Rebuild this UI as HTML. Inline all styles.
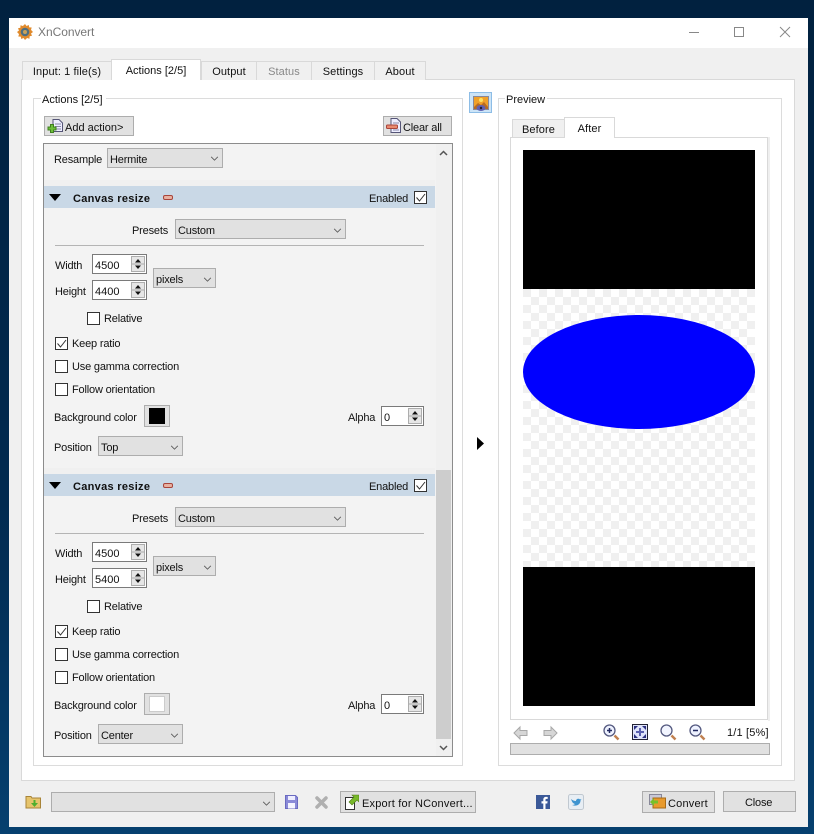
<!DOCTYPE html>
<html><head><meta charset="utf-8"><style>
html,body{margin:0;padding:0;width:814px;height:834px;overflow:hidden}
body{position:relative;background:linear-gradient(180deg,#01213f 0,#012a50 60%,#06406f 100%);font:11px "Liberation Sans",sans-serif;color:#111}
div,svg,span{position:absolute;box-sizing:border-box}
.t{white-space:nowrap;line-height:14px;height:14px;letter-spacing:-.18px;margin-top:1px}
.n{letter-spacing:0}
.b{background:#e1e1e1;border:1px solid #adadad}
.tab{background:#f0f0f0;border:1px solid #d9d9d9;border-bottom:0;text-align:center;line-height:21px;letter-spacing:.1px}
.cb{width:13px;height:13px;border:1px solid #333;background:#fff;margin-top:1px}
.sp{background:#fff;border:1px solid #7a7a7a}
.ub{background:#e6e6e6;border:1px solid #adadad;width:14px;height:16px}
</style></head><body>
<svg style="left:0;top:0" width="0" height="0"><defs>
<symbol id="chev" viewBox="0 0 10 6"><path d="M1 1l4 4 4-4" fill="none" stroke="#555"/></symbol>
<symbol id="spin" viewBox="0 0 12 16"><path d="M6 3l3 3.500H3z M6 13l3-3.500H3z" fill="#111"/><path d="M0 8h12" stroke="#aaa"/></symbol>
<symbol id="check" viewBox="0 0 13 13"><path d="M2.500 6.500l3 3.500 5.500-7" fill="none" stroke="#333"/></symbol>
<symbol id="minus" viewBox="0 0 10 5"><rect x=".5" y=".5" width="9" height="4" rx="1.500" fill="#e8b0a0" stroke="#a8443a"/></symbol>
</defs></svg>

<!-- window -->
<div style="left:9px;top:18px;width:799px;height:809px;background:#f0f0f0"></div>
<div style="left:9px;top:18px;width:799px;height:30px;background:#fff"></div>
<svg style="left:17px;top:24px" width="16" height="16" viewBox="0 0 16 16"><path d="M8 0l1.500 2 2.300-1 .4 2.400 2.500.1-.7 2.400L16 8l-2 1.500 1 2.300-2.400.4-.1 2.500-2.400-.7L8 16l-1.500-2-2.300 1-.4-2.400-2.500-.1.7-2.400L0 8l2-1.500-1-2.300 2.400-.4.1-2.500 2.400.7z" fill="#e08a2c"/><circle cx="8" cy="8" r="4.300" fill="#4f6f80"/><circle cx="8" cy="8" r="2" fill="#c9a25a"/></svg>
<div class="t" style="left:38px;top:24px;font-size:12px;color:#777;letter-spacing:-.05px">XnConvert</div>
<svg style="left:680px;top:19px" width="125" height="26" viewBox="0 0 125 26"><path d="M9 13.500h10" stroke="#888"/><rect x="54.500" y="8.500" width="9" height="9" fill="none" stroke="#888"/><path d="M100 8l10 10M110 8l-10 10" stroke="#888"/></svg>

<!-- tabs -->
<div style="left:21px;top:79px;width:774px;height:702px;background:#fff;border:1px solid #d9d9d9"></div>
<div class="tab" style="left:22px;top:61px;width:90px;height:19px">Input: 1 file(s)</div>
<div class="tab" style="left:201px;top:61px;width:56px;height:19px">Output</div>
<div class="tab" style="left:256px;top:61px;width:56px;height:19px;color:#888">Status</div>
<div class="tab" style="left:311px;top:61px;width:64px;height:19px">Settings</div>
<div class="tab" style="left:374px;top:61px;width:52px;height:19px">About</div>
<div class="tab" style="left:111px;top:59px;width:90px;height:21px;background:#fff;line-height:23px;letter-spacing:0">Actions [2/5]</div>

<!-- actions group -->
<div style="left:33px;top:98px;width:430px;height:668px;border:1px solid #dcdcdc"></div>
<div class="t" style="left:41px;top:92px;background:#fff;padding:0 1px 0 1px;width:65px;letter-spacing:0">Actions [2/5]</div>
<div class="b" style="left:44px;top:116px;width:90px;height:20px"></div>
<svg style="left:47px;top:119px" width="17" height="16" viewBox="0 0 17 16"><path d="M6 .5h6l3.500 3.500v8.500H6z" fill="#eef" stroke="#557"/><path d="M8 5h6M8 7.500h6M8 10h6" stroke="#88a"/><path d="M3.500 5.500h3v2.500h2.500v3H6.500v2.500h-3V11H1V8h2.500z" fill="#6cbf3a" stroke="#3f7f1e"/></svg>
<div class="t" style="left:65px;top:120px;letter-spacing:0">Add action&gt;</div>
<div class="b" style="left:383px;top:116px;width:69px;height:20px"></div>
<svg style="left:386px;top:118px" width="16" height="16" viewBox="0 0 16 16"><path d="M5 .5h6l3.500 3.500v10.500H5z" fill="#eef" stroke="#557"/><path d="M7 5h6M7 12h6" stroke="#88a"/><rect x=".5" y="7" width="11" height="3.500" rx="1" fill="#e98a70" stroke="#a8443a"/></svg>
<div class="t" style="left:403px;top:120px">Clear all</div>

<!-- scroll area -->
<div style="left:43px;top:143px;width:410px;height:614px;background:#f3f3f3;border:1px solid #8c8c8c"></div>
<div style="left:436px;top:144px;width:16px;height:612px;background:#f0f0f0"></div>
<div style="left:436px;top:470px;width:15px;height:269px;background:#cdcdcd"></div>
<svg style="left:439px;top:150px" width="9" height="6" viewBox="0 0 9 6"><path d="M1 5l3.500-3.500L8 5" fill="none" stroke="#555" stroke-width="1.500"/></svg>
<svg style="left:439px;top:745px" width="9" height="6" viewBox="0 0 9 6"><path d="M1 1l3.500 3.500L8 1" fill="none" stroke="#555" stroke-width="1.500"/></svg>
<div class="t" style="left:54px;top:152px">Resample</div>
<div class="b" style="left:107px;top:148px;width:116px;height:20px"></div>
<div class="t" style="left:110px;top:152px">Hermite</div>
<svg style="left:210px;top:156px" width="9" height="5"><use href="#chev"/></svg>

<!-- section 1 -->
<div style="left:44px;top:180px;width:391px;height:6px;background:#f0f0f0"></div>
<div style="left:44px;top:186px;width:391px;height:22px;background:#c9d8e6"></div>
<svg style="left:49px;top:194px" width="12" height="7"><path d="M0 0h12L6 7z" fill="#000"/></svg>
<div class="t" style="left:73px;top:191px;font-weight:bold;letter-spacing:.3px">Canvas resize</div>
<svg style="left:163px;top:195px" width="10" height="5"><use href="#minus"/></svg>
<div class="t" style="left:369px;top:191px">Enabled</div>
<div class="cb" style="left:414px;top:190px"></div><svg style="left:414px;top:191px" width="13" height="13"><use href="#check"/></svg>
<div class="t" style="left:132px;top:223px">Presets</div>
<div class="b" style="left:175px;top:219px;width:171px;height:20px"></div>
<div class="t" style="left:178px;top:223px">Custom</div>
<svg style="left:333px;top:228px" width="9" height="5"><use href="#chev"/></svg>
<div style="left:55px;top:245px;width:369px;height:1px;background:#b4b4b4"></div>
<div class="t" style="left:55px;top:258px">Width</div>
<div class="sp" style="left:92px;top:254px;width:55px;height:20px"></div>
<div class="t n" style="left:95px;top:258px">4500</div>
<div class="ub" style="left:131px;top:256px"></div><svg style="left:132px;top:256px" width="12" height="16"><use href="#spin"/></svg>
<div class="t" style="left:55px;top:284px">Height</div>
<div class="sp" style="left:92px;top:280px;width:55px;height:20px"></div>
<div class="t n" style="left:95px;top:284px">4400</div>
<div class="ub" style="left:131px;top:282px"></div><svg style="left:132px;top:282px" width="12" height="16"><use href="#spin"/></svg>
<div class="b" style="left:153px;top:268px;width:63px;height:20px"></div>
<div class="t" style="left:156px;top:272px">pixels</div>
<svg style="left:203px;top:277px" width="9" height="5"><use href="#chev"/></svg>
<div class="cb" style="left:87px;top:311px"></div>
<div class="t" style="left:104px;top:311px">Relative</div>
<div class="cb" style="left:55px;top:336px"></div><svg style="left:55px;top:337px" width="13" height="13"><use href="#check"/></svg>
<div class="t" style="left:72px;top:336px">Keep ratio</div>
<div class="cb" style="left:55px;top:359px"></div>
<div class="t" style="left:72px;top:359px">Use gamma correction</div>
<div class="cb" style="left:55px;top:382px"></div>
<div class="t" style="left:72px;top:382px">Follow orientation</div>
<div class="t" style="left:54px;top:410px">Background color</div>
<div class="b" style="left:144px;top:405px;width:26px;height:22px"></div>
<div style="left:149px;top:408px;width:16px;height:16px;background:#000"></div>
<div class="t" style="left:348px;top:410px">Alpha</div>
<div class="sp" style="left:381px;top:406px;width:43px;height:20px"></div>
<div class="t" style="left:384px;top:410px">0</div>
<div class="ub" style="left:408px;top:408px"></div><svg style="left:409px;top:408px" width="12" height="16"><use href="#spin"/></svg>
<div class="t" style="left:54px;top:440px">Position</div>
<div class="b" style="left:98px;top:436px;width:85px;height:20px"></div>
<div class="t" style="left:101px;top:440px">Top</div>
<svg style="left:170px;top:445px" width="9" height="5"><use href="#chev"/></svg>

<!-- section 2 -->
<div style="left:44px;top:468px;width:391px;height:6px;background:#f0f0f0"></div>
<div style="left:44px;top:474px;width:391px;height:22px;background:#c9d8e6"></div>
<svg style="left:49px;top:482px" width="12" height="7"><path d="M0 0h12L6 7z" fill="#000"/></svg>
<div class="t" style="left:73px;top:479px;font-weight:bold;letter-spacing:.3px">Canvas resize</div>
<svg style="left:163px;top:483px" width="10" height="5"><use href="#minus"/></svg>
<div class="t" style="left:369px;top:479px">Enabled</div>
<div class="cb" style="left:414px;top:478px"></div><svg style="left:414px;top:479px" width="13" height="13"><use href="#check"/></svg>
<div class="t" style="left:132px;top:511px">Presets</div>
<div class="b" style="left:175px;top:507px;width:171px;height:20px"></div>
<div class="t" style="left:178px;top:511px">Custom</div>
<svg style="left:333px;top:516px" width="9" height="5"><use href="#chev"/></svg>
<div style="left:55px;top:533px;width:369px;height:1px;background:#b4b4b4"></div>
<div class="t" style="left:55px;top:546px">Width</div>
<div class="sp" style="left:92px;top:542px;width:55px;height:20px"></div>
<div class="t n" style="left:95px;top:546px">4500</div>
<div class="ub" style="left:131px;top:544px"></div><svg style="left:132px;top:544px" width="12" height="16"><use href="#spin"/></svg>
<div class="t" style="left:55px;top:572px">Height</div>
<div class="sp" style="left:92px;top:568px;width:55px;height:20px"></div>
<div class="t n" style="left:95px;top:572px">5400</div>
<div class="ub" style="left:131px;top:570px"></div><svg style="left:132px;top:570px" width="12" height="16"><use href="#spin"/></svg>
<div class="b" style="left:153px;top:556px;width:63px;height:20px"></div>
<div class="t" style="left:156px;top:560px">pixels</div>
<svg style="left:203px;top:565px" width="9" height="5"><use href="#chev"/></svg>
<div class="cb" style="left:87px;top:599px"></div>
<div class="t" style="left:104px;top:599px">Relative</div>
<div class="cb" style="left:55px;top:624px"></div><svg style="left:55px;top:625px" width="13" height="13"><use href="#check"/></svg>
<div class="t" style="left:72px;top:624px">Keep ratio</div>
<div class="cb" style="left:55px;top:647px"></div>
<div class="t" style="left:72px;top:647px">Use gamma correction</div>
<div class="cb" style="left:55px;top:670px"></div>
<div class="t" style="left:72px;top:670px">Follow orientation</div>
<div class="t" style="left:54px;top:698px">Background color</div>
<div class="b" style="left:144px;top:693px;width:26px;height:22px"></div>
<div style="left:149px;top:696px;width:16px;height:16px;background:#fff;border:1px solid #ccc"></div>
<div class="t" style="left:348px;top:698px">Alpha</div>
<div class="sp" style="left:381px;top:694px;width:43px;height:20px"></div>
<div class="t" style="left:384px;top:698px">0</div>
<div class="ub" style="left:408px;top:696px"></div><svg style="left:409px;top:696px" width="12" height="16"><use href="#spin"/></svg>
<div class="t" style="left:54px;top:728px">Position</div>
<div class="b" style="left:98px;top:724px;width:85px;height:20px"></div>
<div class="t" style="left:101px;top:728px">Center</div>
<svg style="left:170px;top:733px" width="9" height="5"><use href="#chev"/></svg>

<!-- middle -->
<div style="left:469px;top:92px;width:23px;height:21px;background:#cce4f7;border:1px solid #8dbde6"></div>
<svg style="left:473px;top:96px" width="16" height="16" viewBox="0 0 16 16"><rect x=".5" y=".5" width="15" height="13" fill="#f0a028" stroke="#889"/><circle cx="8" cy="4" r="2" fill="#fde060"/><path d="M1 11l4-4 3 2 3-3 4 5v2H1z" fill="#b86a20"/><ellipse cx="8" cy="12" rx="4.500" ry="3" fill="#6060b0"/><circle cx="8" cy="12" r="1.200" fill="#223"/></svg>
<svg style="left:477px;top:437px" width="7" height="13"><path d="M0 0l7 6.500L0 13z" fill="#000"/></svg>

<!-- preview -->
<div style="left:498px;top:98px;width:284px;height:668px;border:1px solid #dcdcdc"></div>
<div class="t" style="left:505px;top:92px;background:#fff;padding:0 1px;width:42px;letter-spacing:0">Preview</div>
<div class="tab" style="left:512px;top:119px;width:53px;height:19px;line-height:20px">Before</div>
<div style="left:510px;top:137px;width:258px;height:583px;background:#fff;border:1px solid #d9d9d9"></div>
<div style="left:768px;top:137px;width:2px;height:584px;background:#efefef"></div>
<div class="tab" style="left:564px;top:117px;width:51px;height:21px;background:#fff;line-height:22px">After</div>
<div style="left:523px;top:289px;width:232px;height:278px;background-color:#fff;background-image:repeating-conic-gradient(#f0f0f0 0 25%,#fff 0 50%);background-size:16px 16px;background-position:8px 0"></div>
<div style="left:523px;top:150px;width:232px;height:139px;background:#000"></div>
<div style="left:523px;top:567px;width:232px;height:139px;background:#000"></div>
<svg style="left:523px;top:315px" width="232" height="114"><ellipse cx="116" cy="57" rx="116" ry="57" fill="#0000ff"/></svg>

<svg style="left:513px;top:725px" width="16" height="16" viewBox="0 0 16 16"><path d="M1 8l6-6v3.500h7v5H7V14z" fill="#d6d6d6" stroke="#a8a8a8"/></svg>
<svg style="left:542px;top:725px" width="16" height="16" viewBox="0 0 16 16"><path d="M15 8L9 2v3.500H2v5h7V14z" fill="#d6d6d6" stroke="#a8a8a8"/></svg>
<svg style="left:603px;top:724px" width="17" height="17" viewBox="0 0 17 17"><circle cx="6.500" cy="6.500" r="5.500" fill="#eef2ff" stroke="#555a80" stroke-width="1.300"/><path d="M11.500 11.500l4 4" stroke="#c08050" stroke-width="2.500"/><path d="M4 6.500h5M6.500 4v5" stroke="#222a60" stroke-width="1.500"/></svg>
<svg style="left:632px;top:724px" width="16" height="16" viewBox="0 0 16 16"><rect x=".5" y=".5" width="15" height="15" fill="#dfe4fa" stroke="#223"/><path d="M2 2h4L2 6zM14 2h-4l4 4zM2 14h4l-4-4zM14 14h-4l4-4z" fill="#2a2f80"/><path d="M4 8h8M8 4v8" stroke="#5a60b0" stroke-width="2"/></svg>
<svg style="left:660px;top:724px" width="17" height="17" viewBox="0 0 17 17"><circle cx="6.500" cy="6.500" r="5.500" fill="#f2f5ff" stroke="#555a80" stroke-width="1.300"/><path d="M11.500 11.500l4 4" stroke="#c08050" stroke-width="2.500"/></svg>
<svg style="left:689px;top:724px" width="17" height="17" viewBox="0 0 17 17"><circle cx="6.500" cy="6.500" r="5.500" fill="#eef2ff" stroke="#555a80" stroke-width="1.300"/><path d="M11.500 11.500l4 4" stroke="#c08050" stroke-width="2.500"/><path d="M4 6.500h5" stroke="#222a60" stroke-width="1.500"/></svg>
<div class="t" style="left:727px;top:725px;letter-spacing:.17px">1/1 [5%]</div>
<div class="b" style="left:510px;top:743px;width:260px;height:12px"></div>

<!-- bottom -->
<svg style="left:25px;top:794px" width="17" height="15" viewBox="0 0 17 15"><path d="M1 2.500h5l1 1.500h8.500v10H1z" fill="#e6c46c" stroke="#a88438"/><path d="M8.500 6v3H6l3.500 4L13 9h-2.500V6z" fill="#4fae2e"/></svg>
<div class="b" style="left:51px;top:792px;width:224px;height:20px"></div>
<svg style="left:262px;top:801px" width="9" height="5"><use href="#chev"/></svg>
<svg style="left:285px;top:795px" width="13" height="14" viewBox="0 0 13 14"><path d="M.5.500h10l2 2v11H.5z" fill="#8a8ad8" stroke="#6a6ac0"/><rect x="3" y="1" width="7" height="4" fill="#eef"/><rect x="3" y="8" width="7" height="5.500" fill="#f4f4ff"/></svg>
<svg style="left:315px;top:796px" width="13" height="13" viewBox="0 0 13 13"><path d="M2 2l9 9M11 2l-9 9" stroke="#b0b0b0" stroke-width="3.500" stroke-linecap="round"/></svg>
<div class="b" style="left:340px;top:791px;width:136px;height:22px"></div>
<svg style="left:345px;top:794px" width="14" height="16" viewBox="0 0 14 16"><path d="M.5 3.500h9v12h-9z" fill="#fff" stroke="#333"/><path d="M4 8l5-5-2-2h7v7l-2-2-5 5z" fill="#78b82a" stroke="#4c7a14" stroke-width=".6"/></svg>
<div class="t" style="left:362px;top:796px;letter-spacing:.2px">Export for NConvert...</div>
<svg style="left:536px;top:795px" width="14" height="14" viewBox="0 0 14 14"><rect width="14" height="14" fill="#3b5998"/><path d="M9.500 14V8.500h1.800l.3-2.200H9.500V5c0-.7.300-1.100 1.100-1.100h1.100V2c-.4 0-1-.1-1.600-.1-1.700 0-2.800 1-2.800 2.800v1.600H5.500v2.200h1.800V14z" fill="#fff"/></svg>
<svg style="left:568px;top:794px" width="16" height="16" viewBox="0 0 16 16"><rect x=".5" y=".5" width="15" height="15" rx="2" fill="#e8eef4" stroke="#c0c8d0"/><path d="M3 5c2 1.500 3.500 2 5 2 0-2 2.500-3 4-1.500l1.500-.5-1 1.500C12.500 10 9 13 4 11c1.500 0 2.500-.5 3-1C5 9.500 4 8 3 5z" fill="#3f94d0"/></svg>
<div class="b" style="left:642px;top:791px;width:73px;height:22px"></div>
<svg style="left:649px;top:794px" width="17" height="15" viewBox="0 0 17 15"><rect x=".5" y=".5" width="12" height="10" fill="#c8c8d8" stroke="#889"/><rect x="4" y="4" width="12.500" height="10" fill="#e89a2c" stroke="#a86a18"/><path d="M1 8l4-4v2.500h4v3H5V12z" fill="#78c02a"/></svg>
<div class="t" style="left:668px;top:796px;letter-spacing:.2px">Convert</div>
<div class="b" style="left:723px;top:791px;width:73px;height:21px"></div>
<div class="t" style="left:745px;top:795px">Close</div>
</body></html>
